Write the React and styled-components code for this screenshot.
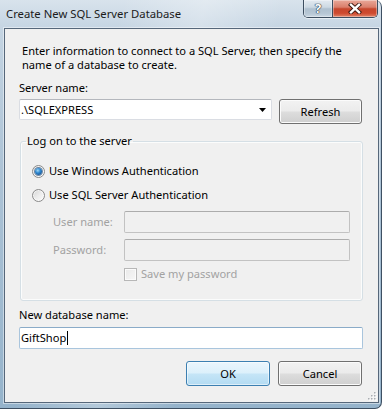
import React from "react";
import styled, { createGlobalStyle } from "styled-components";

const FONT = `"Noto Sans", "Open Sans", "DejaVu Sans", sans-serif`;

const GlobalStyle = createGlobalStyle`
  html, body { margin: 0; padding: 0; background: #ffffff; }
  body {
    font-family: ${FONT};
    font-size: 11.1px;
    line-height: 14px;
    color: #000000;
  }
  * { box-sizing: border-box; }
`;

const Window = styled.div`
  width: 382px;
  height: 409px;
  padding: 0 2px 5px 4px;
  display: flex;
  flex-direction: column;
  border-right: 1px solid #3e5063;
  border-bottom: 1px solid #3e5063;
  border-radius: 0 7px 7px 0;
  background:
    linear-gradient(105deg, rgba(255,255,255,0) 25%, rgba(255,255,255,0.28) 42%, rgba(255,255,255,0) 58%),
    linear-gradient(180deg, #d8e3ec 0px, #c4d4e2 30px, #adc3d6 170px, #95b3cb 409px);
`;

const TitleBar = styled.div`
  flex: none;
  height: 28px;
  display: flex;
  align-items: flex-start;
`;

const Title = styled.div`
  flex: 1;
  padding: 7px 0 0 2px;
  font-size: 11.3px;
  color: #1b1b1b;
  white-space: nowrap;
`;

const CaptionButtons = styled.div`
  display: flex;
  height: 18px;
  margin-right: 1px;
  border: 1px solid #3d4e60;
  border-top: none;
  border-radius: 0 0 5px 5px;
  overflow: hidden;
  box-shadow: 0 1px 0 rgba(255, 255, 255, 0.55);
`;

const CaptionButton = styled.div`
  width: ${(p) => p.$w}px;
  display: flex;
  align-items: center;
  justify-content: center;
  background: ${(p) =>
    p.$close
      ? "linear-gradient(180deg, #e9a899 0%, #da7f6c 42%, #c6462d 52%, #cf4a2f 78%, #e0846a 100%)"
      : "linear-gradient(180deg, #e3eaf1 0%, #cdd9e3 42%, #afc0cf 52%, #b7c7d5 80%, #cbd8e3 100%)"};
  box-shadow: inset 0 0 0 1px rgba(255, 255, 255, 0.35);
  & + & {
    border-left: 1px solid #3d4e60;
  }
`;

const HelpGlyph = styled.span`
  font-family: ${FONT};
  font-weight: 700;
  font-size: 13px;
  line-height: 13px;
  color: #ffffff;
  text-shadow: 0 0 1px #1e2b38, 0 0 1px #1e2b38, 0 0 1px #1e2b38;
`;

const Client = styled.div`
  flex: 1;
  position: relative;
  display: flex;
  flex-direction: column;
  background: #f0f0f0;
  border: 1px solid #56677a;
  box-shadow: 0 0 0 1px rgba(255, 255, 255, 0.45);
  padding: 15px 15px 0 14px;
`;

const Description = styled.p`
  margin: 0 0 0 3px;
  white-space: nowrap;
`;

const FieldLabel = styled.div`
  margin-top: ${(p) => p.$mt}px;
  color: ${(p) => (p.$disabled ? "#a2a2a2" : "#000000")};
`;

const ServerRow = styled.div`
  display: flex;
  align-items: flex-start;
  gap: 7px;
  margin-top: 4px;
`;

const ComboBox = styled.div`
  width: 253px;
  height: 21px;
  display: flex;
  align-items: center;
  padding: 0 5px 0 1px;
  background: #ffffff;
  border: 1px solid #dadde3;
  border-top-color: #b4b7bd;
  border-radius: 2px;
`;

const ComboText = styled.span`
  flex: 1;
`;

const TextBox = styled.div`
  height: 22px;
  margin-top: ${(p) => p.$mt || 0}px;
  display: flex;
  align-items: center;
  padding-left: 1px;
  background: ${(p) => (p.$disabled ? "#f0f0f0" : "#ffffff")};
  border: 1px solid ${(p) => (p.$disabled ? "#c2c2c2" : p.$focused ? "#a9c5dd" : "#dadde3")};
  border-top-color: ${(p) => (p.$disabled ? "#acacac" : p.$focused ? "#8aabc8" : "#b4b7bd")};
  border-radius: 2px;
`;

const Caret = styled.span`
  display: inline-block;
  width: 1px;
  height: 14px;
  margin-left: 1px;
  background: #000000;
`;

const Button = styled.button`
  width: ${(p) => p.$w}px;
  height: 25px;
  padding: 0;
  font: inherit;
  color: #000000;
  border: 1px solid ${(p) => (p.$default ? "#3c7fb1" : "#707070")};
  border-radius: 3px;
  background: ${(p) =>
    p.$default
      ? "linear-gradient(180deg, #eaf6fd 0%, #dcf0fb 48%, #c5e5f7 52%, #b3dbf2 100%)"
      : "linear-gradient(180deg, #f2f2f2 0%, #ebebeb 48%, #dddddd 52%, #cfcfcf 100%)"};
  box-shadow: inset 0 0 0 1px ${(p) => (p.$default ? "rgba(255,255,255,0.55)" : "#fbfbfb")};
`;

const GroupBox = styled.fieldset`
  margin: 10px 0 0 1px;
  padding: 16px 12px 19px 11px;
  border: 1px solid #d5dfe5;
  border-radius: 3px;
  min-width: 0;
  box-shadow: inset 0 0 0 1px #fbfcfc;
  display: flex;
  flex-direction: column;
`;

const Legend = styled.legend`
  padding: 0 1px;
  margin-left: -6px;
`;

const RadioRow = styled.div`
  display: flex;
  align-items: center;
  gap: 4px;
  height: 14px;
  margin-top: ${(p) => p.$mt || 0}px;
`;

const RadioCircle = styled.span`
  flex: none;
  width: 13px;
  height: 13px;
  border-radius: 50%;
  border: 1px solid #8a8a8a;
  background: linear-gradient(135deg, #d4d4d4 0%, #ececec 50%, #fbfbfb 100%);
  box-shadow: inset 0 0 0 1px rgba(255, 255, 255, 0.6);
  display: flex;
  align-items: center;
  justify-content: center;
  &::after {
    content: "";
    display: ${(p) => (p.$checked ? "block" : "none")};
    width: 7px;
    height: 7px;
    border-radius: 50%;
    background: radial-gradient(circle at 40% 35%, #9fd8f6 0%, #2f88d0 40%, #175596 78%, #0e3b6a 100%);
    box-shadow: 0 0 0 1px rgba(28, 70, 115, 0.6);
  }
`;

const Credentials = styled.div`
  display: grid;
  grid-template-columns: 71px 1fr;
  row-gap: 6px;
  align-items: center;
  margin: 9px 0 0 21px;
`;

const CheckRow = styled.div`
  display: flex;
  align-items: center;
  gap: 4px;
  height: 14px;
  color: #a2a2a2;
`;

const CheckBox = styled.span`
  flex: none;
  width: 13px;
  height: 13px;
  border: 1px solid #b7b7b7;
  background: linear-gradient(135deg, #e9e9e9 0%, #f7f7f7 100%);
  box-shadow: inset 0 0 0 1px #fbfbfb;
`;

const ButtonRow = styled.div`
  display: flex;
  justify-content: flex-end;
  gap: 8px;
  margin: 12px 1px 0 0;
`;

const SizeGrip = styled.svg`
  position: absolute;
  right: 1px;
  bottom: 1px;
`;

function CloseGlyph() {
  return (
    <svg width="14" height="11" viewBox="0 0 14 11">
      <path d="M3 1.8 L11 9.2 M11 1.8 L3 9.2" stroke="#3a1710" strokeWidth="4.2" strokeLinecap="square" fill="none" />
      <path d="M3 1.8 L11 9.2 M11 1.8 L3 9.2" stroke="#ffffff" strokeWidth="2.4" strokeLinecap="square" fill="none" />
    </svg>
  );
}

function DropArrow() {
  return (
    <svg width="7" height="4" viewBox="0 0 7 4">
      <path d="M0 0 H7 L3.5 4 Z" fill="#000000" />
    </svg>
  );
}

function Grip() {
  const dots = [
    [8, 2],
    [5, 5],
    [8, 5],
    [2, 8],
    [5, 8],
    [8, 8],
  ];
  return (
    <SizeGrip width="11" height="11" viewBox="0 0 11 11">
      {dots.map(([x, y]) => (
        <g key={`${x}-${y}`}>
          <rect x={x + 1} y={y + 1} width="1.5" height="1.5" fill="#ffffff" />
          <rect x={x} y={y} width="1.5" height="1.5" fill="#a9adb2" />
        </g>
      ))}
    </SizeGrip>
  );
}

export default function App() {
  return (
    <>
      <GlobalStyle />
      <Window>
        <TitleBar>
          <Title>Create New SQL Server Database</Title>
          <CaptionButtons>
            <CaptionButton $w={28}>
              <HelpGlyph>?</HelpGlyph>
            </CaptionButton>
            <CaptionButton $w={45} $close>
              <CloseGlyph />
            </CaptionButton>
          </CaptionButtons>
        </TitleBar>
        <Client>
          <Description>
            Enter information to connect to a SQL Server, then specify the
            <br />
            name of a database to create.
          </Description>

          <FieldLabel $mt={9}>Server name:</FieldLabel>
          <ServerRow>
            <ComboBox>
              <ComboText>.\SQLEXPRESS</ComboText>
              <DropArrow />
            </ComboBox>
            <Button $w={83}>Refresh</Button>
          </ServerRow>

          <GroupBox>
            <Legend>Log on to the server</Legend>
            <RadioRow>
              <RadioCircle $checked />
              <span>Use Windows Authentication</span>
            </RadioRow>
            <RadioRow $mt={10}>
              <RadioCircle />
              <span>Use SQL Server Authentication</span>
            </RadioRow>
            <Credentials>
              <FieldLabel $mt={0} $disabled>User name:</FieldLabel>
              <TextBox $disabled />
              <FieldLabel $mt={0} $disabled>Password:</FieldLabel>
              <TextBox $disabled />
              <span />
              <CheckRow>
                <CheckBox />
                <span>Save my password</span>
              </CheckRow>
            </Credentials>
          </GroupBox>

          <FieldLabel $mt={7}>New database name:</FieldLabel>
          <TextBox $focused $mt={5}>
            <span>GiftShop</span>
            <Caret />
          </TextBox>
          <ButtonRow>
            <Button $w={84} $default>OK</Button>
            <Button $w={84}>Cancel</Button>
          </ButtonRow>
          <Grip />
        </Client>
      </Window>
    </>
  );
}
